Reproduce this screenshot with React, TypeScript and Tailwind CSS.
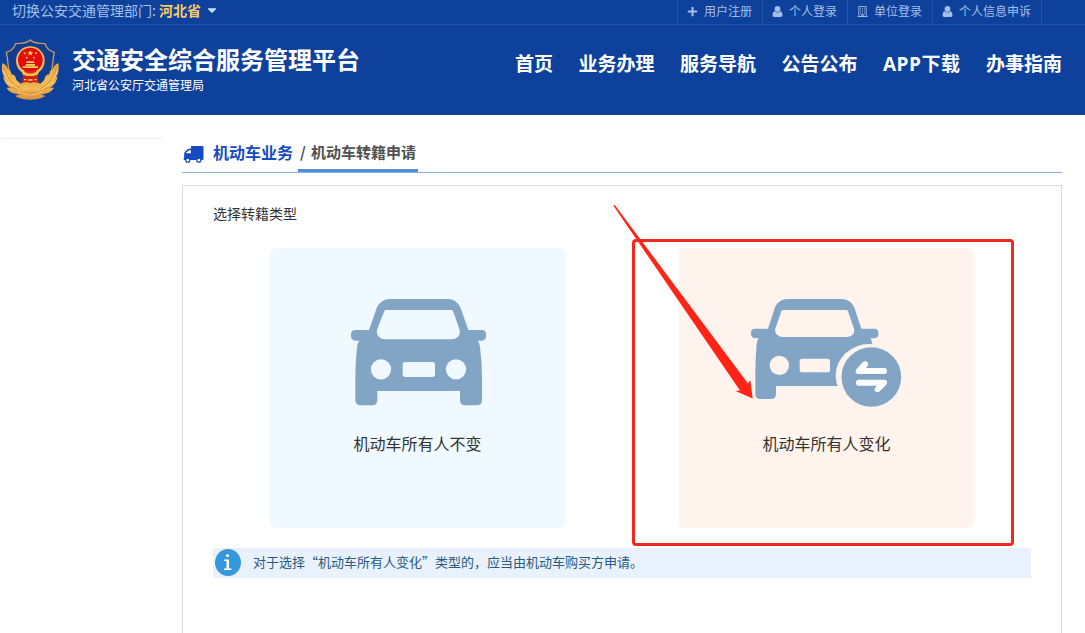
import React from "react";
import { clsx } from "clsx";
import { FaPlus, FaCaretDown } from "react-icons/fa";

const TOP_LINKS = [
  { label: "用户注册", icon: FaPlus, width: "w-[85px]" },
  { label: "个人登录", icon: UserIcon, width: "w-[85px]" },
  { label: "单位登录", icon: BuildingIcon, width: "w-[85px]" },
  { label: "个人信息申诉", icon: UserIcon, width: "w-[109px]" },
];

const NAV_ITEMS = ["首页", "业务办理", "服务导航", "公告公布", "APP下载", "办事指南"];

function UserIcon({ className }: { className?: string }) {
  return (
    <svg viewBox="0 0 11 11" fill="currentColor" className={className}>
      <ellipse cx="5.500" cy="3" rx="2.900" ry="3" />
      <path d="M2.500 5Q5.500 8 8.500 5Q10.500 6 10.500 9Q10.500 11 8.800 11H2.200Q.5 11 .5 9Q.5 6 2.500 5Z" />
    </svg>
  );
}

function BuildingIcon({ className }: { className?: string }) {
  return (
    <svg viewBox="0 0 11 12" fill="none" stroke="currentColor" className={className}>
      <path d="M1.5 .5h8v11h-8z" />
      <path d="M3 2.5h5M3 4.5h5M3 6.5h5M3 8.5h5" strokeDasharray="1 1" />
      <path d="M4.5 11.5v-2h2v2M0 11.5h11" />
    </svg>
  );
}

function PoliceBadge() {
  return (
    <svg viewBox="0 0 180 186" className="h-[62px] w-[60px] shrink-0">
      <defs>
        <linearGradient id="gold" x1="0" y1="0" x2="0" y2="1">
          <stop offset="0" stopColor="#e5a64a" />
          <stop offset=".55" stopColor="#f3bd57" />
          <stop offset="1" stopColor="#d9913d" />
        </linearGradient>
      </defs>
      <path d="M91 3C82 12 60 14 47 14C43 27 31 37 19 40C28 76 19 112 50 141L91 164L132 141C163 112 154 76 163 40C151 37 139 27 135 14C122 14 100 12 91 3Z" fill="#123d8e" stroke="#c69a65" strokeWidth="4" />
      {/* wheat ears */}
      <g fill="url(#gold)">
        <path d="M7 72C17 76 22 83 24 91C30 92 34 99 34 106C43 106 48 115 49 123L62 134L91 130L121 134L133 123C134 115 139 106 148 106C148 99 152 92 158 91C160 83 166 76 175 72C178 92 175 105 166 116L173 112C171 126 163 138 151 146L162 146C154 160 139 165 124 165L135 172C120 180 105 182 91 182C76 182 61 180 46 172L58 165C42 165 27 160 20 146L31 146C19 138 11 126 9 112L16 116C6 105 4 92 7 72Z" />
      </g>
      <g fill="none" stroke="#b97a2c" strokeWidth="1.500">
        <path d="M13 84C19 118 38 137 65 151M169 84C163 118 144 137 117 151M13 119L39 132M24 143L51 149M169 119L143 132M158 143L131 149M46 171L78 158M136 171L104 158" />
      </g>
      <g fill="none" stroke="#ffe191" strokeWidth="2">
        <path d="M10 95C18 122 36 143 59 151M172 95C164 122 146 143 123 151M55 158Q91 178 127 158" />
      </g>
      <path d="M58 138L70 128H112L124 138L118 160L91 167L64 160Z" fill="url(#gold)" />
      <circle cx="91" cy="65" r="43" fill="#f0bd62" />
      <circle cx="91" cy="63" r="37" fill="#e40b0c" />
      <path d="M60 88Q91 110 122 88L113 107Q91 118 69 107Z" fill="#f7c14a" />
      <path d="M69 108q22 8 44 0l2 24-13-3-11 3-11-3-13 3z" fill="#d91b16" />
      <path d="M73 92Q91 102 109 92V98Q91 109 73 98Z" fill="#e5231a" />
      <g fill="#ffd85d">
        <path d="m91 34 2.500 6h6.500l-5 4 2 6-6-4-6 4 2-6-5-4h6.500z" />
        <circle cx="74" cy="43" r="3" />
        <circle cx="108" cy="43" r="3" />
        <circle cx="80" cy="56" r="2.500" />
        <circle cx="102" cy="56" r="2.500" />
        <path d="M81 67h20l3 5H78zM77 75h28v5H77zM68 82h46v5H68z" />
        <path d="M72 120h7v4h-7zM84 121h14v4H84zM103 120h7v4h-7z" />
      </g>
    </svg>
  );
}

function CarIcon() {
  return (
    <svg viewBox="60 54 414 324" className="ml-[3px] h-[108px] w-[138px]">
      <path
        fill="#82a5c5"
        fillRule="evenodd"
        d="M182 57H350C376 57 388 72 393 87L415 150H455Q468 150 468 163V168Q468 181 455 182H444Q448 189 450 201Q456 248 456 290V360Q456 376 440 376H406Q390 376 390 360V333H142V360Q142 376 126 376H92Q76 376 76 360V290Q76 248 81 201Q83 189 88 182H77Q63 181 63 168V163Q63 150 77 150H117L139 87C144 72 158 57 182 57ZM167 90Q164 90 162 95L142 147C136 164 149 178 166 178H365C382 178 394 164 388 147L370 95Q368 90 364 90ZM226 246Q218 246 218 254V283Q218 291 226 291H307Q315 291 315 283V254Q315 246 307 246Z"
      />
      <circle cx="153" cy="268" r="30.500" fill="#f0f9ff" />
      <circle cx="378" cy="268" r="30.500" fill="#f0f9ff" />
    </svg>
  );
}

function CarTransferIcon() {
  return (
    <svg viewBox="60 54 456 330" className="mr-px h-[110px] w-[152px]">
      <path
        fill="#82a5c5"
        fillRule="evenodd"
        d="M174 57H333C357 57 369 71 374 85L394 146H432Q445 146 445 158V163Q445 174 432 175H422Q425 182 428 196V318H138V342Q138 357 123 357H91Q76 357 76 342V277Q76 236 80 192Q81 182 86 175H76Q63 174 63 163V158Q63 146 76 146H114L134 85C139 71 151 57 174 57ZM160 90Q156 90 154 94L137 143C131 158 143 171 158 171H350C367 171 377 158 371 143L354 94Q352 90 348 90ZM217 236Q209 236 209 244V269Q209 277 217 277H292Q300 277 300 269V244Q300 236 292 236Z"
      />
      <circle cx="148" cy="256" r="29" fill="#fff3ed" />
      {/* gap between the car body and the badge */}
      <ellipse cx="418" cy="287" rx="101" ry="95" fill="#fff3ed" />
      <circle cx="424" cy="291" r="89.500" fill="#82a5c5" />
      <path
        fill="#fff"
        d="M398 247C405 240 418 246 414 256L408 264H463Q471 264 471 273Q471 282 463 282H386C376 282 374 274 380 267ZM386 299H462C472 299 474 307 468 315L450 333C442 341 430 335 435 325L441 317H386Q378 317 378 308Q378 299 386 299Z"
      />
    </svg>
  );
}

function TruckIcon({ className }: { className?: string }) {
  return (
    <svg viewBox="0 0 62 51" fill="#154bc2" className={className}>
      <path
        fillRule="evenodd"
        d="M26 0H58Q61 0 61 3V40Q61 42 57 42H3Q1 42 1 39Q3 38 3 34V23Q3 20 5 18L13 10Q15 8 18 8H23V3Q23 0 26 0ZM8 22H23V13H18Q16 13 15 15L8 21Z"
      />
      <g stroke="#154bc2" strokeWidth="3.500" fill="#fff">
        <circle cx="14" cy="42.500" r="6" />
        <circle cx="47" cy="42.500" r="6" />
      </g>
    </svg>
  );
}

function TypeCard({ label, className, children }: { label: string; className: string; children: React.ReactNode }) {
  return (
    <button className={clsx("flex h-[280px] w-[295px] flex-col items-center rounded-md pt-[50px] text-[#333]", className)}>
      <div className="flex h-[133px] items-start">{children}</div>
      <span className="text-base leading-6">{label}</span>
    </button>
  );
}

// Red frame and pointer drawn over the second option
function Annotation() {
  return (
    <div className="pointer-events-none absolute top-[205px] left-[613px] h-[341px] w-[401px]">
      <div className="absolute top-[34px] left-[19px] h-[307px] w-[382px] rounded-[4px] border-3 border-[#f3281f]" />
      <svg viewBox="0 0 140 195" className="absolute top-0 left-0 h-[195px] w-[140px]" fill="#ff2416">
        <path d="M.3 .5L1.800 0L135 178.500L137.300 175L139.700 193.500L122.500 186L127 185.500Z" />
      </svg>
    </div>
  );
}

export default function App() {
  return (
    <div
      lang="zh-CN"
      className="relative h-[633px] w-[1085px] overflow-hidden bg-white font-['Noto_Sans_CJK_SC',sans-serif]"
    >
      <header className="h-[115px] bg-[#0e419c] text-white">
        <div className="flex h-[25px] items-start justify-between border-b border-[#2553a9] pr-[43px] pl-3 text-[#a5bfe8]">
          <div className="flex items-center text-sm leading-5">
            <span className="w-[147px] whitespace-nowrap">切换公安交通管理部门:</span>
            <b className="text-[#fbca68]">河北省</b>
            <FaCaretDown className="ml-[5px] h-3.5 w-3 text-[#c9e1fa]" />
          </div>
          <div className="flex h-6 border-r border-[#2553a9] text-xs leading-[22px]">
            {TOP_LINKS.map(({ label, icon: Icon, width }) => (
              <a key={label} className={clsx("flex shrink-0 items-start border-l border-[#2553a9] pl-[9px]", width)}>
                <Icon className="mt-1.5 mr-1.5 h-[11px] w-[11px] shrink-0" />
                <span className="whitespace-nowrap">{label}</span>
              </a>
            ))}
          </div>
        </div>
        <div className="flex h-[90px] items-start pr-[23px]">
          <div className="mt-3.5 flex">
            <PoliceBadge />
            <div className="ml-3 pt-1">
              <h1 className="text-2xl leading-8 font-bold">交通安全综合服务管理平台</h1>
              <p className="mt-px text-xs leading-[18px]">河北省公安厅交通管理局</p>
            </div>
          </div>
          <nav className="mt-6 ml-auto flex gap-[25.500px] font-['Open_Sans','Noto_Sans_CJK_SC',sans-serif] text-[19px] leading-[30px] font-bold">
            {NAV_ITEMS.map((item) => (
              <a key={item} className={clsx("whitespace-nowrap", item.startsWith("APP") && "tracking-[0.5px]")}>
                {item}
              </a>
            ))}
          </nav>
        </div>
      </header>

      <div className="flex">
        <aside className="mt-[23px] ml-[2px] w-40 border-t border-[#ececec]" />
        <main className="ml-5 w-[880px] pt-[22px]">
          <div className="flex h-9 items-start border-b border-[#8ab1e3] font-bold">
            <TruckIcon className="mt-[9px] ml-px h-[17px] w-[21px]" />
            <span className="ml-[9px] text-base leading-[30px] text-[#154bc2]">机动车业务</span>
            <div className="ml-[5px] flex h-[35px] w-[120px] border-b-3 border-[#538dde] pl-[2px] text-[15px] leading-[30px] font-bold text-[#505050]">
              <span className="w-[11px]">/</span>
              <span className="whitespace-nowrap">机动车转籍申请</span>
            </div>
          </div>

          <section className="mt-3 h-[460px] border border-[#dcdcdc] px-[30px] pt-4">
            <h2 className="text-sm leading-[22px] text-[#333]">选择转籍类型</h2>
            <div className="mt-6 flex gap-[114px] pl-[57px]">
              <TypeCard label="机动车所有人不变" className="bg-[#f0f9ff]">
                <CarIcon />
              </TypeCard>
              <TypeCard label="机动车所有人变化" className="bg-[#fff3ed]">
                <CarTransferIcon />
              </TypeCard>
            </div>
            <div className="mt-5 flex h-[30px] items-start bg-[#e8f1fc] pl-[2px] text-[#285982]">
              <svg viewBox="0 0 26 28" className="mt-px h-7 w-[26px]">
                <ellipse cx="13" cy="13.500" rx="13" ry="13.500" fill="#3498db" />
                <g fill="#fff">
                  <circle cx="12.500" cy="6.500" r="1.600" />
                  <path d="M9 10.500h5v9h2.500V21H9v-1.500h2.500v-7.500H9z" />
                </g>
              </svg>
              <p className="ml-3 text-[13px] leading-7 whitespace-nowrap">
                对于选择“机动车所有人变化”类型的，应当由机动车购买方申请。
              </p>
            </div>
          </section>
        </main>
      </div>
      <Annotation />
    </div>
  );
}
